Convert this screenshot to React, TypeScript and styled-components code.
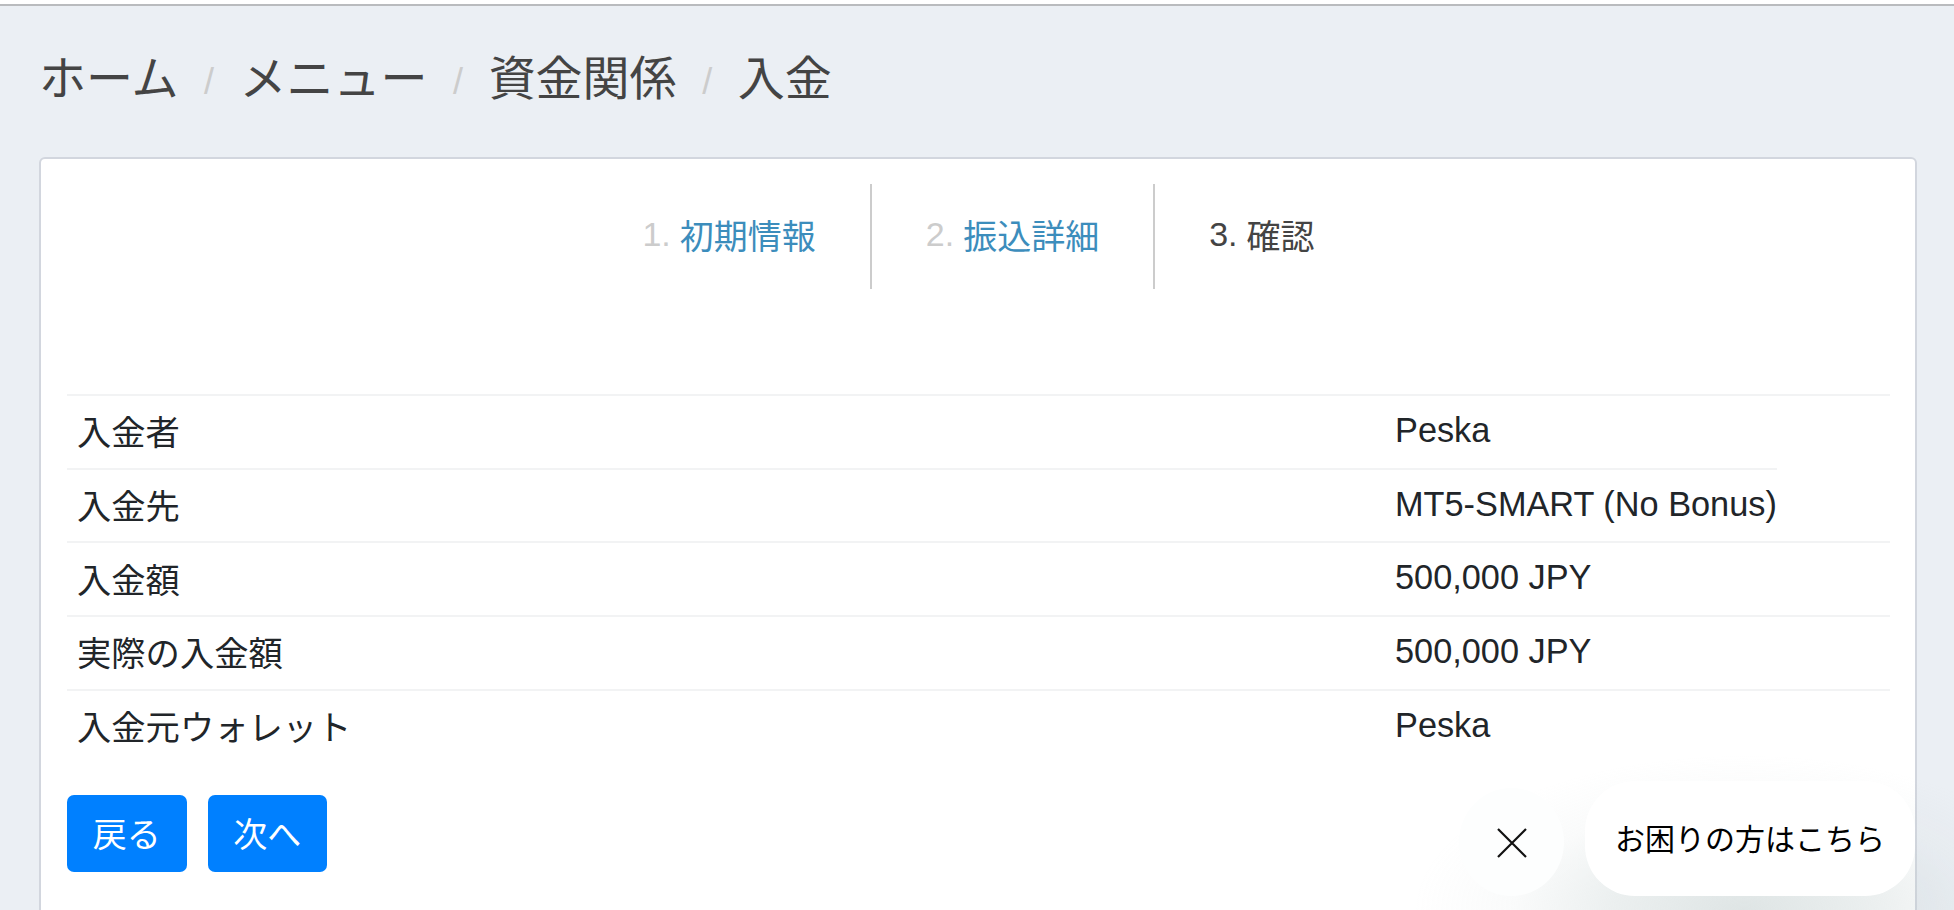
import styled, { createGlobalStyle } from 'styled-components';

const GlobalStyle = createGlobalStyle`
  html, body {
    margin: 0;
    padding: 0;
    height: 100%;
    overflow: hidden;
    background: #ebeff4;
  }
  body {
    font-family: "Liberation Sans", "Noto Sans CJK JP", sans-serif;
  }
`;

const crumbs = ['ホーム', 'メニュー', '資金関係', '入金'];

const steps = [
  { num: '1.', label: '初期情報', done: true },
  { num: '2.', label: '振込詳細', done: true },
  { num: '3.', label: '確認', done: false },
];

const rows = [
  { label: '入金者', value: 'Peska' },
  { label: '入金先', value: 'MT5-SMART (No Bonus)', short: true },
  { label: '入金額', value: '500,000 JPY' },
  { label: '実際の入金額', value: '500,000 JPY' },
  { label: '入金元ウォレット', value: 'Peska' },
];

const App = () => {
  return (
    <>
      <GlobalStyle />
      <Page>
        <TopBar />
        <Content>
          <Breadcrumb>
            {crumbs.map((c, i) => (
              <Crumb key={c}>
                {i > 0 && <Slash>/</Slash>}
                {c}
              </Crumb>
            ))}
          </Breadcrumb>

          <Card>
            <Steps>
              {steps.map((s, i) => (
                <Step key={s.num} $last={i === steps.length - 1}>
                  <StepNum $done={s.done}>{s.num}</StepNum>
                  <StepLabel $done={s.done}>{s.label}</StepLabel>
                </Step>
              ))}
            </Steps>

            <Table>
              {rows.map((r) => (
                <Row key={r.label} $short={r.short}>
                  <Cell>{r.label}</Cell>
                  <Cell>{r.value}</Cell>
                </Row>
              ))}
            </Table>

            <Actions>
              <Button>戻る</Button>
              <Button>次へ</Button>
            </Actions>
          </Card>
        </Content>
      </Page>

      <Glow />
      <Widget>
        <CloseBtn aria-label="close">
          <svg width="30" height="30" viewBox="0 0 30 30">
            <path d="M1 1 L29 29 M29 1 L1 29" stroke="#111" strokeWidth="2.2" fill="none" />
          </svg>
        </CloseBtn>
        <HelpBtn>お困りの方はこちら</HelpBtn>
      </Widget>
    </>
  );
};

export default App;

/* ---------------- styled-components ---------------- */

const Page = styled.div`
  height: 910px;
  overflow: hidden;
`;

const TopBar = styled.div`
  height: 4px;
  background: #fff;
  border-bottom: 2px solid #b9bbbe;
`;

const Content = styled.main`
  padding: 0 37px 0 39px;
`;

const Breadcrumb = styled.nav`
  display: flex;
  align-items: center;
  height: 151px;
  padding: 0 0 14px 0;
  box-sizing: border-box;
  font-size: 47px;
  color: #444;
`;

const Crumb = styled.span`
  display: flex;
  align-items: center;
`;

const Slash = styled.span`
  color: #ccc;
  font-size: 36px;
  margin-top: 15px;
  padding: 0 25.5px;
`;

const Card = styled.section`
  box-sizing: border-box;
  height: 900px;
  padding: 25px 25px 0 26px;
  background: #fff;
  border: 2px solid #d2d6de;
  border-radius: 6px;
`;

const Steps = styled.ul`
  display: flex;
  justify-content: center;
  list-style: none;
  margin: 0;
  padding: 0;
`;

const Step = styled.li<{ $last: boolean }>`
  display: flex;
  align-items: center;
  gap: 9px;
  height: 105px;
  padding: 0 54px 5px;
  box-sizing: border-box;
  font-size: 34px;
  border-right: ${({ $last }) => ($last ? 'none' : '2px solid #ccc')};
`;

const StepNum = styled.span<{ $done: boolean }>`
  color: ${({ $done }) => ($done ? '#ccc' : '#444')};
`;

const StepLabel = styled.span<{ $done: boolean }>`
  color: ${({ $done }) => ($done ? '#3c8dbc' : '#444')};
`;

const Table = styled.div`
  margin-top: 105px;
`;

const Row = styled.div<{ $short?: boolean }>`
  display: grid;
  grid-template-columns: 1318px 1fr;
  align-items: center;
  box-sizing: border-box;
  height: 73.7px;
  padding: 0 0 3px 10px;
  width: ${({ $short }) => ($short ? '1710px' : '100%')};
  border-top: 2px solid #f2f3f4;
  font-size: 34.3px;
  color: #212529;
  white-space: nowrap;
`;

const Cell = styled.div``;

const Actions = styled.div`
  display: flex;
  gap: 21px;
  margin-top: 33px;
`;

const Button = styled.button`
  width: 119.5px;
  height: 77px;
  padding: 0 0 3px;
  border: none;
  border-radius: 7px;
  background: #0080ff;
  color: #fff;
  font-family: inherit;
  font-size: 34px;
`;

const Glow = styled.div`
  position: fixed;
  right: 0;
  bottom: 0;
  width: 700px;
  height: 200px;
  pointer-events: none;
  background: radial-gradient(
    ellipse 330px 155px at 70% 100%,
    rgba(190, 203, 203, 0.5) 0%,
    rgba(190, 203, 203, 0.3) 40%,
    rgba(190, 203, 203, 0.08) 70%,
    rgba(190, 203, 203, 0) 100%
  );
`;

const Widget = styled.div`
  position: fixed;
  right: 39px;
  bottom: 14px;
  display: flex;
  align-items: flex-end;
  gap: 21px;
`;

const CloseBtn = styled.button`
  display: flex;
  align-items: center;
  justify-content: center;
  width: 105px;
  height: 108px;
  padding: 2px 0 0;
  border: none;
  border-radius: 50%;
  background: #fdfefe;
`;

const HelpBtn = styled.button`
  width: 330px;
  height: 115px;
  padding: 0 0 4px;
  border: none;
  border-radius: 50px;
  background: #fff;
  color: #000;
  font-family: inherit;
  font-size: 30px;
  white-space: nowrap;
`;
